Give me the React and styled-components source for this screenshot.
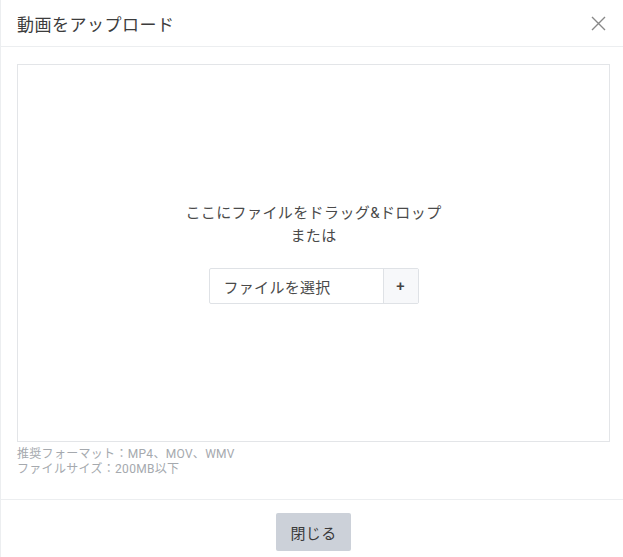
import styled, { createGlobalStyle } from 'styled-components'

const GlobalStyle = createGlobalStyle`
  html, body {
    margin: 0;
    padding: 0;
    background: #fff;
    overflow: hidden;
  }
  body {
    font-family: Roboto, "Noto Sans CJK JP", sans-serif;
    color: #333;
  }
`

const Modal = styled.div`
  width: 626px;
  background: #fff;
  border-left: 1px solid #eceef0;
  box-sizing: border-box;
`

const Header = styled.div`
  height: 46px;
  display: flex;
  align-items: center;
  justify-content: space-between;
  padding: 0 16px;
  border-bottom: 1px solid #eceef0;
`

const Title = styled.h2`
  margin: 0;
  font-size: 17px;
  font-weight: 400;
  letter-spacing: 0.5px;
  color: #3c3c3c;
  padding-top: 1px;
`

const CloseIcon = styled.button`
  width: 18px;
  height: 18px;
  padding: 0;
  border: none;
  background: none;
  color: #888;
  display: flex;
  align-items: center;
  justify-content: center;
  margin-right: 3px;
  cursor: pointer;
`

const Body = styled.div`
  padding: 17px 16px 22px;
`

const DropZone = styled.div`
  height: 376px;
  border: 1px solid #e3e5e8;
  display: flex;
  flex-direction: column;
  align-items: center;
  justify-content: center;
  gap: 20px;
`

const DropText = styled.p`
  margin: 0;
  font-size: 15px;
  line-height: 23px;
  letter-spacing: 0.4px;
  color: #4a4a4a;
  text-align: center;
`

const FileGroup = styled.div`
  display: flex;
  height: 36px;
  border: 1px solid #dfe2e6;
  border-radius: 2px;
  box-sizing: border-box;
`

const FileLabel = styled.span`
  width: 173px;
  padding-left: 14px;
  box-sizing: border-box;
  display: flex;
  align-items: center;
  font-size: 15px;
  letter-spacing: 0.3px;
  color: #4a4a4a;
`

const AddButton = styled.button`
  width: 35px;
  border: none;
  border-left: 1px solid #dfe2e6;
  background: #f7f8fa;
  font-family: inherit;
  font-size: 15px;
  font-weight: 500;
  color: #444;
  padding: 0;
  cursor: pointer;
`

const Hints = styled.div`
  margin-top: 5px;
  font-size: 12px;
  line-height: 15px;
  letter-spacing: 0.3px;
  color: #a5a9ae;
`

const Footer = styled.div`
  border-top: 1px solid #eceef0;
  padding: 13px 16px;
  display: flex;
  justify-content: center;
`

const CloseButton = styled.button`
  height: 38px;
  padding: 0 15px;
  border: none;
  border-radius: 2px;
  background: #ccd1d9;
  font-family: inherit;
  font-size: 15px;
  letter-spacing: 0.3px;
  color: #3a3a3a;
  cursor: pointer;
`

const App = () => (
  <>
    <GlobalStyle />
    <Modal>
      <Header>
        <Title>動画をアップロード</Title>
        <CloseIcon aria-label='close'>
          <svg width='15' height='15' viewBox='0 0 15 15'>
            <path d='M1 1 L14 14 M14 1 L1 14' stroke='currentColor' strokeWidth='1.4' fill='none' />
          </svg>
        </CloseIcon>
      </Header>
      <Body>
        <DropZone>
          <DropText>
            ここにファイルをドラッグ&amp;ドロップ<br />
            または
          </DropText>
          <FileGroup>
            <FileLabel>ファイルを選択</FileLabel>
            <AddButton>+</AddButton>
          </FileGroup>
        </DropZone>
        <Hints>
          推奨フォーマット：MP4、MOV、WMV<br />
          ファイルサイズ：200MB以下
        </Hints>
      </Body>
      <Footer>
        <CloseButton>閉じる</CloseButton>
      </Footer>
    </Modal>
  </>
)

export default App
